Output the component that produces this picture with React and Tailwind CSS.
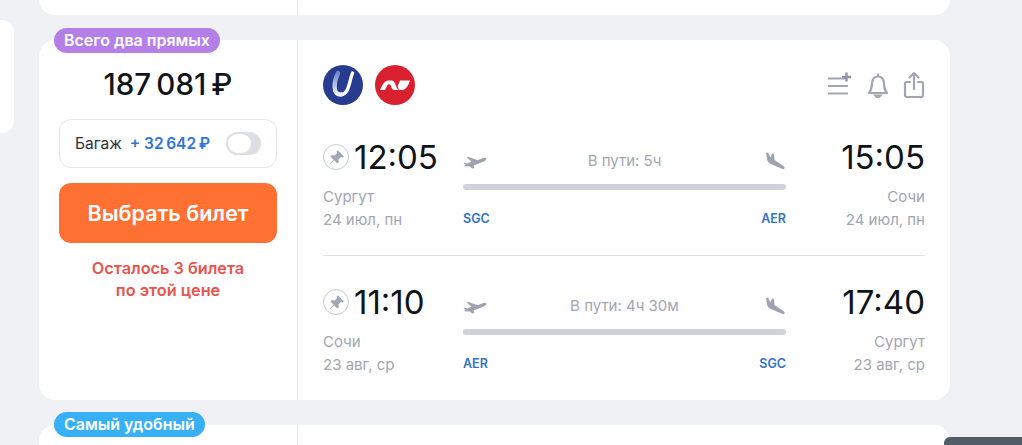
const font = { fontFamily: "Inter, 'Noto Sans', sans-serif" };

function Plane({ land }) {
  return land ? (
    <svg width="24" height="20" viewBox="0 0 24 20" fill="#9ca3af" className="block">
      <path d="M4 2 L6 1.5 L8.5 6.5 L10 2.5 L12 3 L12.5 9 L22 15.5 Q23.4 17 22 18 Q21 18.6 19.5 17.6 L9 13 Q5.5 11.5 5 8 Z" />
    </svg>
  ) : (
    <svg width="24" height="16" viewBox="0 0 24 16" fill="#9ca3af" className="block">
      <path d="M0.4 13.2 L7 13.4 L9 15.6 L11.4 15 L10.6 12.6 L21.4 8.2 Q24 7 23.4 5.6 Q22.4 4.2 19.6 5.2 L14.8 7.2 L5.6 4 L3.6 4.4 L8.4 8.6 L4.2 10.4 L1.8 9.4 L0.6 10 L2.6 12 Z" />
    </svg>
  );
}

function Pin() {
  return (
    <div className="w-[26px] h-[26px] rounded-full border border-[#c5c9d2] flex items-center justify-center shrink-0">
      <svg width="17" height="17" viewBox="0 0 15 15" fill="#a0a7b5">
        <path d="M8.6 1 L14 6.4 L12.8 7.4 L11.4 7 L9.2 9.2 L9.6 11.6 L8.2 12.8 L5.5 10 L1.6 13.6 L1.3 13.3 L4.9 9.4 L2.2 6.6 L3.4 5.4 L5.8 5.8 L8 3.6 L7.6 2.2 Z" />
      </svg>
    </div>
  );
}

function Segment({ dep, arr, duration, from, to, fromCity, toCity, depDate, arrDate, pad }) {
  return (
    <div className={`flex ${pad}`}>
      <div className="w-[140px] shrink-0">
        <div className="flex items-center gap-[5px] h-[36px]">
          <Pin />
          <span className="text-[33px] leading-[36px] text-[#0f1419]">{dep}</span>
        </div>
        <div className="mt-[10px] text-[15px] leading-[23px] text-[#a0a6b2]">{fromCity}</div>
        <div className="text-[15px] leading-[23px] text-[#a0a6b2]">{depDate}</div>
      </div>
      <div className="w-[323px] shrink-0 pt-[13px]">
        <div className="flex items-center justify-between h-[18px]">
          <Plane />
          <span className="text-[15px] text-[#a0a6b2]">{duration}</span>
          <Plane land />
        </div>
        <div className="h-[6px] rounded-full bg-[#ced2db] mt-[14px]" />
        <div className="flex justify-between mt-[21px] text-[12.5px] leading-[16px] font-semibold text-[#3173c9]">
          <span>{from}</span>
          <span>{to}</span>
        </div>
      </div>
      <div className="flex-1 text-right">
        <div className="text-[33px] leading-[36px] text-[#0f1419]">{arr}</div>
        <div className="mt-[10px] text-[15px] leading-[23px] text-[#a0a6b2]">{toCity}</div>
        <div className="text-[15px] leading-[23px] text-[#a0a6b2]">{arrDate}</div>
      </div>
    </div>
  );
}

export default function App() {
  return (
    <div style={font} className="relative h-[445px] w-[1022px] overflow-hidden bg-[#eff1f4] flex">
      <div className="w-[14px] h-[113px] mt-[20px] bg-white rounded-r-xl shrink-0" />
      <div className="ml-[25px] w-[911px] flex flex-col">
        <div className="h-[15px] shrink-0 bg-white rounded-b-2xl flex">
          <div className="w-[259px] border-r border-[#e6e8ec]" />
        </div>

        <div className="relative mt-[25px] h-[360px] shrink-0 bg-white rounded-2xl flex">
          <div className="absolute -top-[12px] left-[15px] h-[25px] px-[10px] rounded-full bg-[#b57fe8] text-white text-[16px] leading-[25px] font-semibold">
            Всего два прямых
          </div>
          <div className="w-[259px] shrink-0 border-r border-[#e6e8ec] px-[20px] pt-[26px] flex flex-col">
            <div className="text-center text-[29.5px] leading-[36px] font-medium text-[#0f1419]">187{"\u2009"}081{"\u2009"}₽</div>
            <div className="mt-[17px] h-[49px] rounded-xl border border-[#e3e5ea] flex items-center pl-[15px] pr-[15px] text-[15.5px]">
              <span className="text-[#2c3138]">Багаж</span>
              <span className="ml-[8px] font-semibold text-[#2f74d8]">+ 32{"\u2009"}642{"\u2009"}₽</span>
              <div className="ml-auto w-[35px] h-[23px] rounded-full bg-[#dcdee3] p-[2px]">
                <div className="w-[23px] h-[19px] rounded-full bg-white" />
              </div>
            </div>
            <div className="mt-[15px] h-[60px] rounded-xl bg-[#ff7033] text-white text-[21.5px] font-semibold flex items-center justify-center">
              Выбрать билет
            </div>
            <div className="mt-[14px] text-center text-[16.25px] leading-[22px] font-semibold text-[#e8544e] whitespace-nowrap">
              Осталось 3 билета
              <br />
              по этой цене
            </div>
          </div>

          <div className="flex-1 px-[25px] pt-[25px] min-w-0">
            <div className="flex items-center justify-between h-[40px]">
              <div className="flex gap-[12px]">
                <div className="w-[40px] h-[40px] rounded-full bg-[#273c8e] flex items-center justify-center">
                  <svg width="40" height="40" viewBox="0 0 40 40" fill="none">
                    <defs>
                      <linearGradient id="ug" x1="0" y1="0" x2="0" y2="1">
                        <stop offset="0" stopColor="#6f86cc" />
                        <stop offset="1" stopColor="#eef2fc" />
                      </linearGradient>
                    </defs>
                    <path d="M29.5 8 C26 17 26 29.5 18 29.5" stroke="#fff" strokeWidth="3.4" strokeLinecap="round" />
                    <path d="M15 8 C11 16 9 30 18 29.5" stroke="url(#ug)" strokeWidth="4.4" strokeLinecap="round" />
                  </svg>
                </div>
                <div className="w-[40px] h-[40px] rounded-full bg-[#d9202f] flex items-center justify-center">
                  <svg width="30" height="10" viewBox="0 0 30 10" fill="#fff">
                    <path d="M0 10 C2 6 4 0.5 8.5 0.5 H12 C14 0.5 15 3 16 6 C16.6 8 17.5 9.5 19.5 10 H14.5 C12 10 11.5 7 10.5 5 C9.5 3.5 8 4 7 6 L5 10 Z" />
                    <path d="M20 0.5 H30 C28.5 5 26 10 22 10 H19.5 C18.5 9 18 7.5 17.6 6 C18.5 4.5 19.3 2.5 20 0.5 Z" />
                  </svg>
                </div>
              </div>
              <div className="flex items-center gap-[13px]">
                <svg width="26" height="28" viewBox="0 0 26 28" fill="none" stroke="#a0a6b2" strokeWidth="2.2">
                  <path d="M1 7.5H20M1 15H21M1 22.5H21" />
                  <path d="M19.5 1.5V10.5M15 6H24" stroke="#8f95a1" strokeWidth="2.4" />
                </svg>
                <svg width="24" height="28" viewBox="0 0 24 28" fill="none" stroke="#a0a6b2" strokeWidth="2.2">
                  <path d="M3 22 C6 19 5.5 16 6 12 C6.5 8 9 5.5 12 5.5 C15 5.5 17.5 8 18 12 C18.5 16 18 19 21 22 Z" strokeLinejoin="round" />
                  <path d="M12 2.5V5" />
                  <path d="M9.5 24.5 Q12 27.5 14.5 24.5 Z" fill="#a0a6b2" />
                </svg>
                <svg width="22" height="28" viewBox="0 0 22 28" fill="none" stroke="#a0a6b2" strokeWidth="2.2" strokeLinecap="round" strokeLinejoin="round">
                  <path d="M7 11H3.5 Q2 11 2 12.5V24 Q2 26 4 26H18 Q20 26 20 24V12.5 Q20 11 18.5 11H15" />
                  <path d="M11 18V2M6.5 6.5L11 2L15.5 6.5" />
                </svg>
              </div>
            </div>

            <div className="mt-[13px] border-b border-[#dfe1e6] h-[138px]">
              <Segment dep="12:05" arr="15:05" duration="В пути: 5ч" from="SGC" to="AER" fromCity="Сургут" toCity="Сочи" depDate="24 июл, пн" arrDate="24 июл, пн" pad="pt-[21px]" />
            </div>
            <Segment dep="11:10" arr="17:40" duration="В пути: 4ч 30м" from="AER" to="SGC" fromCity="Сочи" toCity="Сургут" depDate="23 авг, ср" arrDate="23 авг, ср" pad="pt-[28px]" />
          </div>
        </div>

        <div className="relative mt-[25px] flex-1 bg-white rounded-t-2xl flex">
          <div className="absolute -top-[13px] left-[15px] h-[25px] px-[10px] rounded-full bg-[#38b0f6] text-white text-[16px] leading-[25px] font-semibold">
            Самый удобный
          </div>
          <div className="w-[259px] border-r border-[#e6e8ec]" />
        </div>
      </div>
      <div className="absolute left-[944px] top-[437px] w-[78px] h-[8px] rounded-tl-md bg-[#535b66]" />
    </div>
  );
}
